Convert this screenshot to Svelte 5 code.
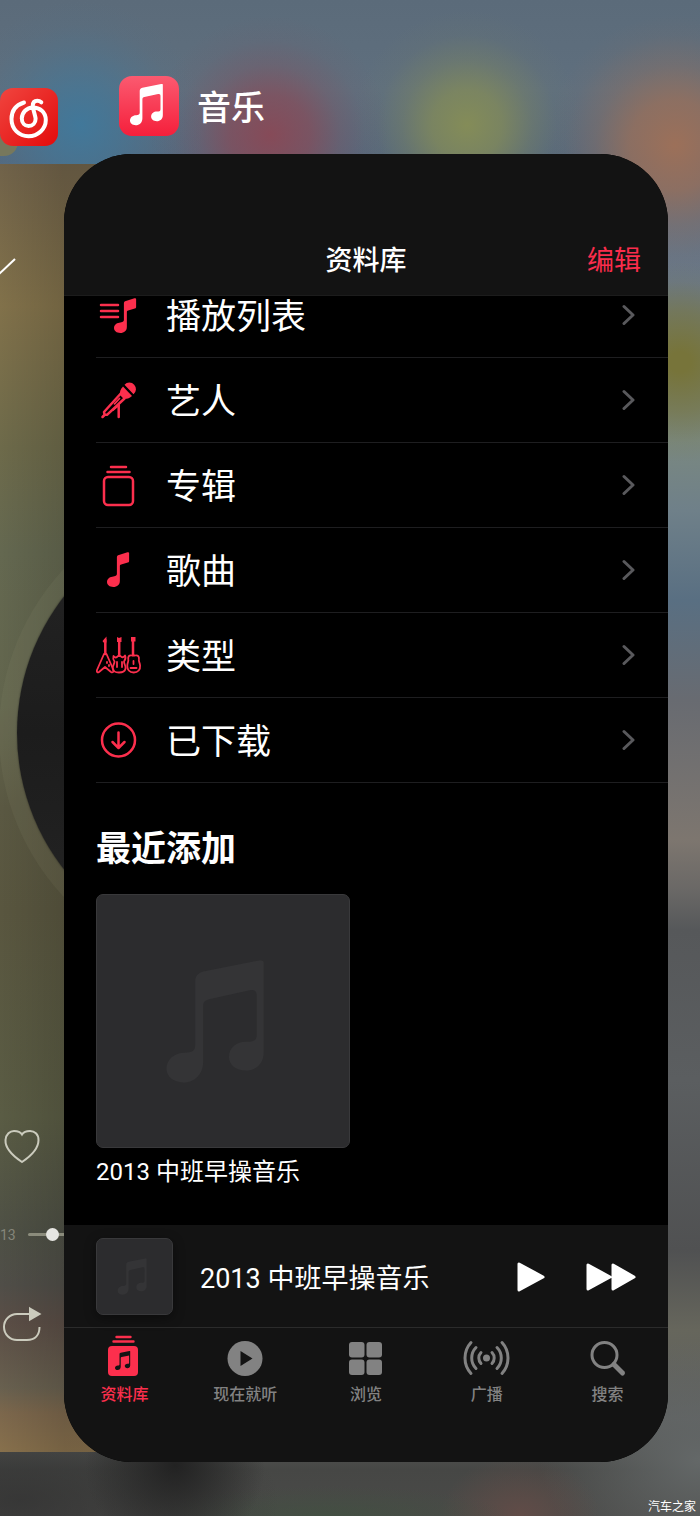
<script lang="ts">
    type Row = { name: string; icon: string };
    type Tab = { name: string; icon: string };

    const rows: Row[] = [
        { name: "播放列表", icon: "playlist" },
        { name: "艺人", icon: "artist" },
        { name: "专辑", icon: "album" },
        { name: "歌曲", icon: "song" },
        { name: "类型", icon: "genre" },
        { name: "已下载", icon: "download" },
    ];

    const tabs: Tab[] = [
        { name: "资料库", icon: "library" },
        { name: "现在就听", icon: "listen" },
        { name: "浏览", icon: "browse" },
        { name: "广播", icon: "radio" },
        { name: "搜索", icon: "search" },
    ];

    const track = "2013 中班早操音乐";

    let activeTab = $state("资料库");
    let position = $state(16);

    // single note, 67 x 106
    const note =
        "M67 3v24c0 3-2 4-4 5l-20 6c-3 1-4 2-4 5v44c0 12-8 19-20 19C8 106 0 100 0 91c0-9 7-15 16-16 10-1 14-3 14-8V16c0-4 2-6 6-7L62 1c3-1 5 0 5 2z";
    // beamed notes, 98 x 123
    const notes =
        "M98 2v91c0 11-8 18-18 18-10 0-17-6-17-14 0-9 8-15 17-15 7 0 11-1 11-7V36c0-5-2-7-7-6l-41 9c-4 1-6 3-6 7v56c0 13-9 21-20 21C7 123 0 117 0 109c0-9 8-16 18-16 8 0 11-2 11-8V21c0-5 2-8 8-10l56-11c3 0 5 0 5 2z";
</script>

<div class="switcher">
    <section class="behind" aria-label="网易云音乐">
        <div class="pill"></div>
        <svg class="netease" viewBox="0 0 58 58">
            <path
                d="M24 14.5C16 17 11.5 23 11.5 31c0 10 7.5 17.2 17 17.2S45.8 41 45.8 32c0-8-6-12.5-13-12.5-6 0-11 5-11 11 0 4.5 3 7.5 6.8 7.5 4.2 0 7-3 7-7.2 0-2.5-2.6-9-2.8-13 0-3.5 2-5 4.5-5 2 0 3 .6 4 1.5"
            />
        </svg>
        <div class="player">
            <div class="disc"></div>
            <svg class="back" viewBox="0 0 20 20">
                <path d="M-2 19L15 3" />
            </svg>
            <div class="actions">
                <button aria-label="喜欢">
                    <svg viewBox="0 0 44 44">
                        <path
                            d="M22 38C13 32 5 25 5.5 16 6 10 10 7 14 7c3.5 0 6.5 1 8 3.5C23.5 8 26.5 7 30 7c4.5 0 8.5 3 8.5 9C38.5 25 31 32 22 38z"
                        />
                    </svg>
                </button>
                <label class="progress">
                    <span>13</span>
                    <input
                        type="range"
                        min="0"
                        max="100"
                        bind:value={position}
                    />
                </label>
                <button aria-label="循环">
                    <svg viewBox="0 0 44 44">
                        <path
                            d="M30 12H17A13 13 0 0 0 17 38H27C35 38 39.5 33 39.5 25"
                        />
                        <path class="tip" d="M30 6.5L39.5 12 30 17.5z" />
                    </svg>
                </button>
            </div>
        </div>
    </section>

    <header class="app">
        <svg viewBox="0 0 60 60">
            <defs>
                <linearGradient id="music" x1="0" y1="0" x2="0" y2="1">
                    <stop offset="0" stop-color="#fb5a70" />
                    <stop offset="1" stop-color="#f51f3b" />
                </linearGradient>
            </defs>
            <rect width="60" height="60" rx="13" fill="url(#music)" />
            <path
                d={notes}
                fill="#fff"
                transform="translate(11 8) scale(.335)"
            />
        </svg>
        <span>音乐</span>
    </header>

    <main class="card">
        <div class="navbar">
            <h1>资料库</h1>
            <button>编辑</button>
        </div>

        <div class="content">
            <ul>
                {#each rows as row}
                    <li>
                        <a href="#{row.icon}">
                            <svg class="icon" viewBox="0 0 46 46">
                                {#if row.icon === "playlist"}
                                    <path
                                        class="line"
                                        d="M5 13h17M5 19h17M5 25h17"
                                    />
                                    <path
                                        d={note}
                                        transform="translate(18 6) scale(.33)"
                                    />
                                {:else if row.icon === "artist"}
                                    <path
                                        d="M28.5 7.7a6.6 6.6 0 1 1 9 9.6z"
                                    />
                                    <path
                                        d="M27 9.500L36 19C33.500 21.500 30.500 22 27.500 21.700L23.800 17.800C23.500 15 24.500 12 27 9.500z"
                                    />
                                    <path
                                        class="line"
                                        d="M24.300 17L8 35l.5 2.500 2.500.3L28.500 21.500M6.500 40L9 37.500M22.700 28V40"
                                    />
                                    <path
                                        class="thin"
                                        d="M23.500 21.500l-5 5.300M17 33l6-5"
                                    />
                                {:else if row.icon === "album"}
                                    <rect
                                        class="line"
                                        x="8"
                                        y="15"
                                        width="29"
                                        height="28"
                                        rx="4"
                                    />
                                    <path class="line" d="M11.5 10h22M15 5h15" />
                                {:else if row.icon === "song"}
                                    <path
                                        d={note}
                                        transform="translate(11 5) scale(.33)"
                                    />
                                {:else if row.icon === "genre"}
                                    <path
                                        class="thin"
                                        d="M8 22L1 38c-.5 2 .5 3 2 2l6-5 6 5c1.500 1 3 0 2.500-2L10.500 22zM11 30v1M13 33v1"
                                    />
                                    <path
                                        class="thin"
                                        d="M17.500 24c1.500 2 3 2 4.500 0h2.500c1.500 2 3 1.500 4.500-.5 1 2 .5 4-1 6 0 3 2 4 1.500 7-.5 3-3 4-6.500 4S17 39.500 16.700 36.500c-.3-3 1.800-4 1.800-7-1.500-2-1.500-4-1-5.500zM21 30v5M26 30v5"
                                    />
                                    <path
                                        class="thin"
                                        d="M36 23.500c-3-.8-4.200 1-3.700 4 .4 2-.8 3-1 6-.2 4 2 7 6.400 7s6.800-3 6.400-7c-.3-3-1.600-4-1.200-6 .5-3-1-4.800-3.900-4zM34.500 36h6M37.500 29v3"
                                    />
                                    <path
                                        class="neck"
                                        d="M9.300 8v14M23.200 9v14M37 9v14"
                                    />
                                    <path
                                        d="M10.500 4.500v6H7.500L6.500 9zM21 5l2 1 2.500-1v5h-4.500zM35 5h4.500v4.500H35z"
                                    />
                                {:else}
                                    <circle
                                        class="line"
                                        cx="22.5"
                                        cy="23"
                                        r="16.5"
                                    />
                                    <path
                                        class="line"
                                        d="M22.5 15.5v15M16.5 25l6 6 6-6"
                                    />
                                {/if}
                            </svg>
                            <span>{row.name}</span>
                            <svg class="chevron" viewBox="0 0 14 22">
                                <path d="M2 2.5l9 8.5-9 8.5" />
                            </svg>
                        </a>
                    </li>
                {/each}
            </ul>

            <h2>最近添加</h2>
            <div class="albums">
                <a href="#recent">
                    <div class="cover">
                        <svg viewBox="0 0 254 254">
                            <path d={notes} transform="translate(70 66)" />
                        </svg>
                    </div>
                    <p>{track}</p>
                </a>
            </div>
        </div>

        <div class="mini">
            <div class="cover">
                <svg viewBox="0 0 254 254">
                    <path d={notes} transform="translate(70 66)" />
                </svg>
            </div>
            <p>{track}</p>
            <button aria-label="播放">
                <svg width="28" height="32" viewBox="0 0 28 32">
                    <path d="M2 3v26l24-13z" />
                </svg>
            </button>
            <button aria-label="下一首">
                <svg width="50" height="32" viewBox="0 0 50 32">
                    <path d="M2 4v24l22-12zM27 4v24l21-12z" />
                </svg>
            </button>
        </div>

        <nav>
            {#each tabs as tab}
                <button
                    class:active={tab.name === activeTab}
                    onclick={() => (activeTab = tab.name)}
                >
                    <svg viewBox="0 0 48 48">
                        {#if tab.icon === "library"}
                            <path class="bar" d="M13.5 7.5h20M16.5 3h14" />
                            <rect x="8" y="12" width="30" height="30" rx="4" />
                            <path
                                class="hole"
                                d={notes}
                                transform="translate(15 17) scale(.155)"
                            />
                        {:else if tab.icon === "listen"}
                            <circle cx="24" cy="24.5" r="17.5" />
                            <path class="hole" d="M19.5 17v15l12-7.5z" />
                        {:else if tab.icon === "browse"}
                            <rect x="7" y="8" width="15.5" height="15.5" rx="3" />
                            <rect x="24.5" y="8" width="15.5" height="15.5" rx="3" />
                            <rect x="7" y="25.5" width="15.5" height="15.5" rx="3" />
                            <rect x="24.5" y="25.5" width="15.5" height="15.5" rx="3" />
                        {:else if tab.icon === "radio"}
                            <circle cx="23.5" cy="24" r="3.5" />
                            <path
                                class="wave"
                                d="M18 18.5a8 8 0 0 0 0 11M29 18.5a8 8 0 0 1 0 11M13 13.5a15 15 0 0 0 0 21M34 13.5a15 15 0 0 1 0 21M8 8.5a23 23 0 0 0 0 31M39 8.5a23 23 0 0 1 0 31"
                            />
                        {:else}
                            <circle class="lens" cx="20.5" cy="21" r="12.5" />
                            <path class="handle" d="M30 30.5l8.5 8.5" />
                        {/if}
                    </svg>
                    {tab.name}
                </button>
            {/each}
        </nav>
    </main>

    <small>汽车之家</small>
</div>

<style>
    :global(body) {
        background: #4b4b49;
    }

    .switcher {
        position: relative;
        overflow: hidden;
        box-sizing: border-box;
        padding: 76px 32px 54px 64px;
        font-family: Roboto, "Noto Sans CJK SC", sans-serif;
        color: #fff;
        background:
            radial-gradient(
                circle at 270px 135px,
                #8c4653e0 0,
                #8c4653a0 40px,
                #8c465340 70px,
                #8c465310 95px,
                #8c465300 120px
            ),
            radial-gradient(
                circle at 467px 125px,
                #848c58 0,
                #848c58c0 35px,
                #848c5850 65px,
                #848c5810 90px,
                #848c5800 115px
            ),
            radial-gradient(
                circle at 675px 145px,
                #9c7059 0,
                #9c7059c0 45px,
                #9c705950 80px,
                #9c705910 110px,
                #9c705900 130px
            ),
            radial-gradient(
                circle at 80px 125px,
                #41789a 0,
                #41789aa0 40px,
                #41789a40 75px,
                #41789a10 100px,
                #41789a00 125px
            ),
            radial-gradient(
                ellipse 110px 100px at 680px 362px,
                #77743a 10%,
                #77743a90 50%,
                #77743a20 80%,
                #77743a00 100%
            ),
            radial-gradient(
                ellipse 90px 90px at 175px 1465px,
                #222222 0,
                #22222280 50%,
                #22222200 100%
            ),
            radial-gradient(
                ellipse 260px 110px at 20px 1500px,
                #2f2f2fb0 0,
                #2f2f2f00 100%
            ),
            radial-gradient(
                ellipse 180px 30px at 330px 1516px,
                #3f523fa0 0,
                #3f523f00 100%
            ),
            radial-gradient(
                ellipse 80px 60px at 520px 1516px,
                #694d47c0 0,
                #694d4700 100%
            ),
            radial-gradient(
                ellipse 160px 120px at 700px 1460px,
                #646868 0,
                #64686800 100%
            ),
            linear-gradient(
                180deg,
                #5b6b7a 0,
                #5f6f7e 90px,
                #56687c 160px,
                #6b7887 280px,
                #7a8880 440px,
                #6f8089 510px,
                #596f82 600px,
                #686b71 700px,
                #7d766f 840px,
                #6a6866 890px,
                #56585a 930px,
                #5b5e60 1080px,
                #505152 1250px,
                #66665c 1330px,
                #5c5e5e 1420px,
                #464745 1470px,
                #4a4a48 100%
            );
    }

    button {
        padding: 0;
        border: 0;
        background: none;
        font: inherit;
        color: inherit;
    }

    a {
        color: inherit;
        text-decoration: none;
    }

    svg {
        display: block;
    }

    h1,
    h2,
    p,
    ul {
        margin: 0;
        padding: 0;
    }

    /* card of the previous app, peeking out on the left */
    .behind {
        position: absolute;
        top: 88px;
        bottom: 64px;
        left: 0;
        width: 120px;
        display: flex;
        flex-direction: column;
    }

    .netease {
        position: relative;
        width: 58px;
        height: 58px;
        flex: none;
        margin-bottom: 18px;
        border-radius: 13px;
        background: linear-gradient(135deg, #f0453f, #e30b0b);
    }

    .netease path {
        fill: none;
        stroke: #fff;
        stroke-width: 4;
        stroke-linecap: round;
    }

    .pill {
        position: absolute;
        top: 48px;
        left: 0;
        width: 18px;
        height: 20px;
        border-radius: 0 0 14px 0;
        background: #77785c;
    }

    .player {
        position: relative;
        flex: 1;
        display: flex;
        flex-direction: column;
        justify-content: space-between;
        overflow: hidden;
        padding: 92px 0 84px;
        background:
            linear-gradient(90deg, #0000 0, #00000020 64px),
            linear-gradient(
                180deg,
                #706249 0,
                #81714a 11%,
                #6d6a4a 22%,
                #646850 30%,
                #62654d 42%,
                #5a5842 50%,
                #59563f 58%,
                #5a5c44 74%,
                #4e5045 83%,
                #504e48 87%,
                #5b4e46 90%,
                #68604f 95%,
                #7c674c 97%,
                #87704c 100%
            );
    }

    .disc {
        position: absolute;
        top: 347px;
        left: 17px;
        width: 444px;
        height: 444px;
        border-radius: 50%;
        background: linear-gradient(180deg, #252525, #1c1c1c 50%, #252525);
        box-shadow:
            0 0 2px #0008,
            0 0 0 18px #a0a08218;
    }

    .back {
        position: relative;
        width: 20px;
        height: 20px;
    }

    .back path {
        fill: none;
        stroke: #fff;
        stroke-width: 2;
    }

    .actions {
        position: relative;
        display: grid;
        grid-auto-rows: 89px;
        align-items: center;
    }

    .actions svg {
        width: 44px;
        height: 44px;
        fill: none;
        stroke: #cbcbbd;
        stroke-width: 2;
    }

    .actions .tip {
        fill: #cbcbbd;
    }

    .actions button {
        justify-self: start;
    }

    .progress {
        display: flex;
        align-items: center;
        gap: 12px;
        font-size: 14px;
        color: #85867a;
    }

    .progress input {
        flex: 1;
        min-width: 0;
        height: 3px;
        margin: 0;
        appearance: none;
        border-radius: 2px;
        background: #8b8c7c;
    }

    .progress input::-webkit-slider-thumb {
        appearance: none;
        width: 13px;
        height: 13px;
        border-radius: 50%;
        background: #e6e6e2;
    }

    .app {
        position: relative;
        display: flex;
        align-items: center;
        gap: 18px;
        height: 60px;
        margin: 0 0 18px 55px;
        font-size: 34px;
        font-weight: 500;
    }

    .app svg {
        width: 60px;
        height: 60px;
    }

    .app span {
        padding-bottom: 2px;
    }

    .card {
        position: relative;
        overflow: hidden;
        border-radius: 68px;
        background: #000;
    }

    .navbar {
        position: relative;
        z-index: 1;
        display: grid;
        grid-template-columns: 1fr auto 1fr;
        align-items: center;
        padding: 87px 27px 14px;
        border-bottom: 1px solid #1c1c1c;
        background: #131313;
        font-size: 27px;
        line-height: 40px;
    }

    .navbar h1 {
        grid-column: 2;
        font-size: 27px;
        font-weight: 500;
    }

    .navbar button {
        justify-self: end;
        color: #fb2d4c;
    }

    .content {
        padding: 0 0 37px 32px;
    }

    /* list is scrolled a little way under the navbar */
    ul {
        margin-top: -23px;
        list-style: none;
    }

    li a {
        display: flex;
        align-items: center;
        gap: 24px;
        height: 84px;
        padding-right: 32px;
        border-bottom: 1px solid #1e1e20;
        font-size: 35px;
    }

    li span {
        flex: 1;
        padding-bottom: 4px;
    }

    .icon {
        width: 46px;
        height: 46px;
        fill: #fc2f4d;
    }

    .icon .line,
    .icon .thin,
    .icon .neck {
        fill: none;
        stroke: #fc2f4d;
        stroke-width: 2.5;
        stroke-linecap: round;
        stroke-linejoin: round;
    }

    .icon .thin {
        stroke-width: 1.8;
    }

    .chevron {
        width: 14px;
        height: 22px;
        fill: none;
        stroke: #59595c;
        stroke-width: 3;
        stroke-linecap: round;
        stroke-linejoin: round;
    }

    h2 {
        padding: 42px 0 19px;
        font-size: 35px;
        font-weight: 700;
        line-height: 50px;
    }

    .albums {
        display: grid;
        grid-template-columns: 1fr 1fr;
        gap: 32px;
        padding-right: 32px;
    }

    .albums p {
        margin-top: 8px;
        font-size: 24px;
        line-height: 32px;
    }

    .cover {
        box-sizing: border-box;
        border: 1px solid #39393b;
        border-radius: 7px;
        background: #2c2c2e;
    }

    .cover path {
        fill: #343436;
    }

    .mini {
        display: flex;
        align-items: center;
        padding: 13px 32px 12px;
        background: #131313;
        font-size: 27px;
    }

    .mini .cover {
        width: 77px;
        box-shadow: 0 3px 12px #0006;
    }

    .mini p {
        flex: 1;
        margin-left: 27px;
    }

    .mini button {
        margin-left: 41px;
    }

    .mini button svg {
        fill: #fff;
        stroke: #fff;
        stroke-width: 3;
        stroke-linejoin: round;
    }

    nav {
        display: grid;
        grid-template-columns: repeat(5, 1fr);
        padding: 6px 0 54px;
        border-top: 1px solid #2b2b2b;
        background: #131313;
        font-size: 16px;
        font-weight: 500;
        line-height: 26px;
        color: #828282;
        fill: #828282;
        stroke: #828282;
    }

    nav button {
        display: flex;
        flex-direction: column;
        align-items: center;
    }

    nav .active {
        color: #fc2f4d;
        fill: #fc2f4d;
        stroke: #fc2f4d;
    }

    nav svg {
        width: 48px;
        height: 48px;
        stroke-width: 0;
    }

    nav .hole {
        fill: #131313;
    }

    nav .bar,
    nav .wave,
    nav .lens,
    nav .handle {
        fill: none;
        stroke-width: 3;
        stroke-linecap: round;
    }

    nav .bar {
        stroke-width: 2.4;
    }

    nav .handle {
        stroke-width: 5;
    }

    small {
        position: absolute;
        right: 4px;
        bottom: 2px;
        font-size: 12px;
    }
</style>
